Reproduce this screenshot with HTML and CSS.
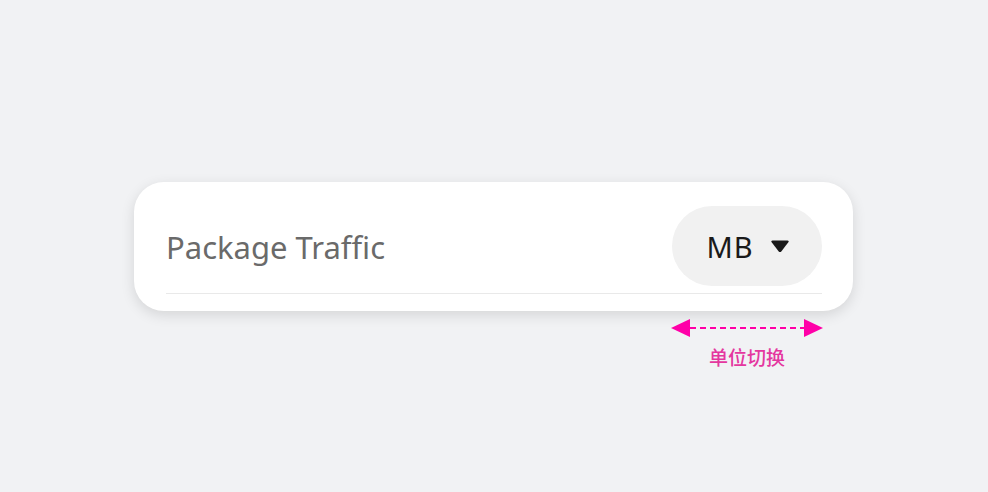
FILE: index.html
```html
<!DOCTYPE html>
<html lang="en">
<head>
    <meta charset="UTF-8">
    <meta name="viewport" content="width=device-width, initial-scale=1.0">
    <title>Package Traffic - Unit Switch</title>
    <link rel="stylesheet" href="styles.css">
</head>
<body>
    <div class="stage">
        <div class="field">
            <!-- Input card -->
            <div class="card">
                <div class="card-row">
                    <span class="field-label">Package Traffic</span>
                    <button class="unit-btn" type="button">
                        <span class="unit-text">MB</span>
                        <svg class="unit-caret" width="20" height="14" viewBox="0 0 20 14">
                            <path d="M2.5 1.5 H17.5 Q19.5 1.5 18.3 3.2 L11.5 12.2 Q10 14 8.5 12.2 L1.7 3.2 Q0.5 1.5 2.5 1.5 Z" fill="#1a1a1a"/>
                        </svg>
                    </button>
                </div>
                <div class="divider"></div>
            </div>

            <!-- Annotation -->
            <div class="annotation">
                <svg class="span-arrow" width="152" height="18" viewBox="0 0 152 18">
                    <polygon points="0,9 19,0 19,18" fill="#ff00a8"/>
                    <line x1="19" y1="9" x2="133" y2="9" stroke="#ff00a8" stroke-width="2" stroke-dasharray="6 4"/>
                    <polygon points="152,9 133,0 133,18" fill="#ff00a8"/>
                </svg>
                <span class="annotation-text">单位切换</span>
            </div>
        </div>
    </div>
</body>
</html>
```

FILE: styles.css
```css
body {
    margin: 0;
    background-color: #f1f2f4;
    font-family: "Noto Sans", Arial, sans-serif;
}
.stage {
    padding: 182px 0 0 134px;
}
.field {
    display: flex;
    flex-direction: column;
    width: 719px;
}
.card {
    background-color: #fff;
    border-radius: 30px;
    padding: 24px 31px 17px 32px;
    box-shadow: 0 4px 14px rgba(0, 0, 0, 0.12);
}
.card-row {
    display: flex;
    align-items: center;
    justify-content: space-between;
    height: 80px;
}
.field-label {
    font-size: 31px;
    color: #6a6a6a;
    padding-top: 2px;
}
.unit-btn {
    display: flex;
    align-items: center;
    justify-content: center;
    gap: 16px;
    width: 150px;
    height: 80px;
    border: none;
    border-radius: 40px;
    background-color: #f1f1f1;
    font-family: inherit;
    padding: 0 0 0 2px;
}
.unit-text {
    font-size: 29px;
    letter-spacing: 1px;
    color: #1a1a1a;
}
.unit-caret {
    display: block;
}
.divider {
    height: 1px;
    background-color: #e9e9e9;
    margin-top: 7px;
}
.annotation {
    align-self: flex-end;
    margin-right: 30px;
    width: 152px;
    display: flex;
    flex-direction: column;
    align-items: center;
    padding-top: 8px;
}
.span-arrow {
    display: block;
}
.annotation-text {
    margin-top: 6px;
    font-family: "Noto Sans CJK SC", sans-serif;
    font-size: 19px;
    font-weight: 500;
    color: #e4379f;
}
```
